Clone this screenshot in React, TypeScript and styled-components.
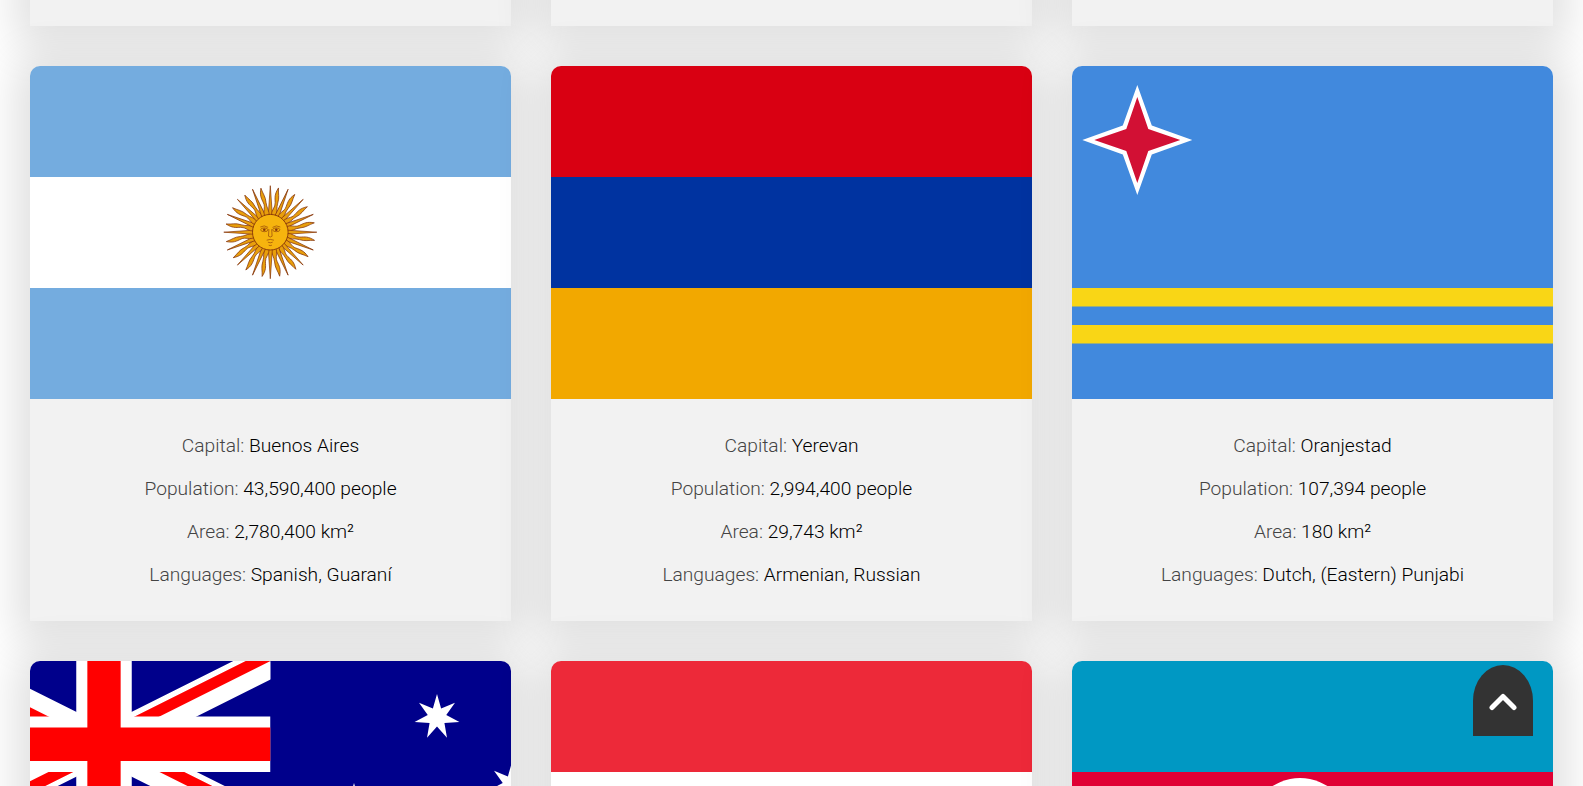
import React from "react";
import styled, { createGlobalStyle } from "styled-components";

const Global = createGlobalStyle`
  html, body { margin: 0; padding: 0; height: 786px; overflow: hidden; background: #fff; }
  body { font-family: Roboto, "Liberation Sans", sans-serif; }
`;

const Viewport = styled.div`
  height: 786px;
  overflow: hidden;
`;

const Page = styled.main`
  display: grid;
  grid-template-columns: repeat(3, 1fr);
  gap: 40px;
  padding: 0 30px;
  margin-top: -529px;
  align-content: start;
`;

const CardStub = styled.div`
  height: 555px;
  background: #f2f2f2;
  box-shadow: 0 5px 40px 15px rgba(0, 0, 0, 0.12);
`;

const Card = styled.article`
  background: #f2f2f2;
  box-shadow: 0 5px 40px 15px rgba(0, 0, 0, 0.12);
  border-radius: 10px 10px 0 0;
`;

const FlagFrame = styled.div`
  height: 333px;
  overflow: hidden;
  border-radius: 10px 10px 0 0;
  svg { display: block; width: 100%; height: 100%; }
`;

const Details = styled.div`
  padding: 25px 0;
`;

const Row = styled.p`
  margin: 0;
  text-align: center;
  font-size: 19.2px;
  font-weight: 300;
  line-height: 43px;
  color: #444;
  span { color: #000; }
`;

const TopButton = styled.button`
  position: fixed;
  right: 50px;
  bottom: 50px;
  width: 60px;
  height: 71px;
  border: none;
  padding: 0;
  border-radius: 50% 50% 0 0;
  background: #333;
  display: flex;
  align-items: center;
  justify-content: center;
`;

const star = (cx: number, cy: number, r: number, inner: number, n: number) =>
  Array.from({ length: n * 2 }, (_, i) => {
    const a = (Math.PI * i) / n - Math.PI / 2;
    const d = i % 2 ? inner : r;
    return `${(cx + d * Math.cos(a)).toFixed(2)},${(cy + d * Math.sin(a)).toFixed(2)}`;
  }).join(" ");

const fourStar = (cx: number, cy: number, tip: number, waist: number) =>
  [
    [0, -tip], [waist, -waist], [tip, 0], [waist, waist],
    [0, tip], [-waist, waist], [-tip, 0], [-waist, -waist],
  ]
    .map(([x, y]) => `${cx + x},${cy + y}`)
    .join(" ");

const Sun = ({ cx, cy }: { cx: number; cy: number }) => (
  <g transform={`translate(${cx} ${cy})`}>
    {Array.from({ length: 32 }, (_, i) => (
      <g key={i} transform={`rotate(${i * 11.25})`}>
        {i % 2 === 0 ? (
          <path d="M-2.1 -16 L0 -46.5 L2.1 -16 Z" fill="#e89f0c" stroke="#85340a" strokeWidth="0.7" />
        ) : (
          <path
            d="M-2 -16 C-3.8 -22 0.4 -25 -1 -30 C-2.2 -35 -3.4 -38 -0.6 -45 C0.2 -39 2.4 -36 1.6 -30 C1 -25 3.6 -21 2 -16 Z"
            fill="#e89f0c"
            stroke="#85340a"
            strokeWidth="0.7"
          />
        )}
      </g>
    ))}
    <circle r="17.8" fill="#f6b40e" stroke="#85340a" strokeWidth="0.9" />
    <g fill="none" stroke="#85340a" strokeWidth="0.6">
      <ellipse cx="-6" cy="-2.4" rx="3.6" ry="1.9" />
      <ellipse cx="6" cy="-2.4" rx="3.6" ry="1.9" />
      <path d="M-10 -5.2 Q-6 -7.6 -2.2 -4.8 M10 -5.2 Q6 -7.6 2.2 -4.8" />
      <path d="M-1.4 -3 L-1.8 4 Q0 5.6 1.8 4 L1.4 -3" />
      <path d="M-3.6 8 Q0 6.4 3.6 8 M-2.4 10 Q0 11.2 2.4 10" />
      <path d="M-1.6 13 Q0 13.8 1.6 13" />
    </g>
    <circle cx="-6" cy="-2.4" r="1.3" fill="#85340a" />
    <circle cx="6" cy="-2.4" r="1.3" fill="#85340a" />
  </g>
);

const Stripes = ({ colors }: { colors: string[] }) => (
  <svg viewBox="0 0 481 333" preserveAspectRatio="none" aria-hidden="true">
    {colors.map((c, i) => (
      <rect key={c + i} x="0" y={i * 111} width="481" height="111" fill={c} />
    ))}
  </svg>
);

const Argentina = () => (
  <svg viewBox="0 0 481 333" preserveAspectRatio="none" aria-hidden="true">
    <rect width="481" height="333" fill="#74acdf" />
    <rect y="111" width="481" height="111" fill="#fff" />
    <Sun cx={240.3} cy={166.2} />
  </svg>
);

const Aruba = () => (
  <svg viewBox="0 0 481 333" preserveAspectRatio="none" aria-hidden="true">
    <rect width="481" height="333" fill="#4189dd" />
    <rect y="222" width="481" height="18.5" fill="#f9d616" />
    <rect y="259" width="481" height="18.5" fill="#f9d616" />
    <polygon points={fourStar(65.3, 74, 55, 14.5)} fill="#fff" />
    <polygon points={fourStar(65.3, 74, 43, 11)} fill="#d21034" />
  </svg>
);

const Australia = () => (
  <svg viewBox="92.5 0 481 333" aria-hidden="true">
    <defs>
      <clipPath id="jack-canton">
        <rect width="60" height="30" />
      </clipPath>
      <clipPath id="jack-sides">
        <path d="M30,15 h30 v15 z v15 h-30 z h-30 v-15 z v-15 h30 z" />
      </clipPath>
    </defs>
    <rect x="0" width="666" height="333" fill="#00008b" />
    <g transform="scale(5.55)" clipPath="url(#jack-canton)">
      <path d="M0,0 L60,30 M60,0 L0,30" stroke="#fff" strokeWidth="6" />
      <path d="M0,0 L60,30 M60,0 L0,30" stroke="#f00" strokeWidth="4" clipPath="url(#jack-sides)" />
      <path d="M30,0 v30 M0,15 h60" stroke="#fff" strokeWidth="10" />
      <path d="M30,0 v30 M0,15 h60" stroke="#f00" strokeWidth="6" />
    </g>
    <polygon points={star(499.5, 56, 23, 9.5, 7)} fill="#fff" />
    <polygon points={star(416.5, 145, 23, 9.5, 7)} fill="#fff" />
    <polygon points={star(574.5, 124, 23, 9.5, 7)} fill="#fff" />
  </svg>
);

const Azerbaijan = () => (
  <svg viewBox="0 0 481 333" preserveAspectRatio="none" aria-hidden="true">
    <rect width="481" height="111" fill="#0098c3" />
    <rect y="111" width="481" height="111" fill="#e00034" />
    <rect y="222" width="481" height="111" fill="#00ae65" />
    <circle cx="228" cy="168" r="51" fill="#fff" />
  </svg>
);

const Armenia = () => <Stripes colors={["#d90012", "#0033a0", "#f2a800"]} />;
const Austria = () => <Stripes colors={["#ed2939", "#ffffff", "#ed2939"]} />;

const countries = [
  { id: "ar", Flag: Argentina, capital: "Buenos Aires", population: "43,590,400", area: "2,780,400", languages: "Spanish, Guaraní" },
  { id: "am", Flag: Armenia, capital: "Yerevan", population: "2,994,400", area: "29,743", languages: "Armenian, Russian" },
  { id: "aw", Flag: Aruba, capital: "Oranjestad", population: "107,394", area: "180", languages: "Dutch, (Eastern) Punjabi" },
];

const cropped = [
  { id: "au", Flag: Australia },
  { id: "at", Flag: Austria },
  { id: "az", Flag: Azerbaijan },
];

export default function App() {
  return (
    <>
      <Global />
      <Viewport>
        <Page>
          <CardStub />
          <CardStub />
          <CardStub />
          {countries.map(({ id, Flag, capital, population, area, languages }) => (
            <Card key={id}>
              <FlagFrame><Flag /></FlagFrame>
              <Details>
                <Row>Capital: <span>{capital}</span></Row>
                <Row>Population: <span>{population} people</span></Row>
                <Row>Area: <span>{area} km²</span></Row>
                <Row>Languages: <span>{languages}</span></Row>
              </Details>
            </Card>
          ))}
          {cropped.map(({ id, Flag }) => (
            <Card key={id}>
              <FlagFrame><Flag /></FlagFrame>
            </Card>
          ))}
        </Page>
      </Viewport>
      <TopButton aria-label="Back to top">
        <svg width="30" height="20" viewBox="0 0 30 20" aria-hidden="true">
          <path d="M4 16.5 L15 5.5 L26 16.5" fill="none" stroke="#fff" strokeWidth="5" strokeLinecap="round" strokeLinejoin="round" />
        </svg>
      </TopButton>
    </>
  );
}
